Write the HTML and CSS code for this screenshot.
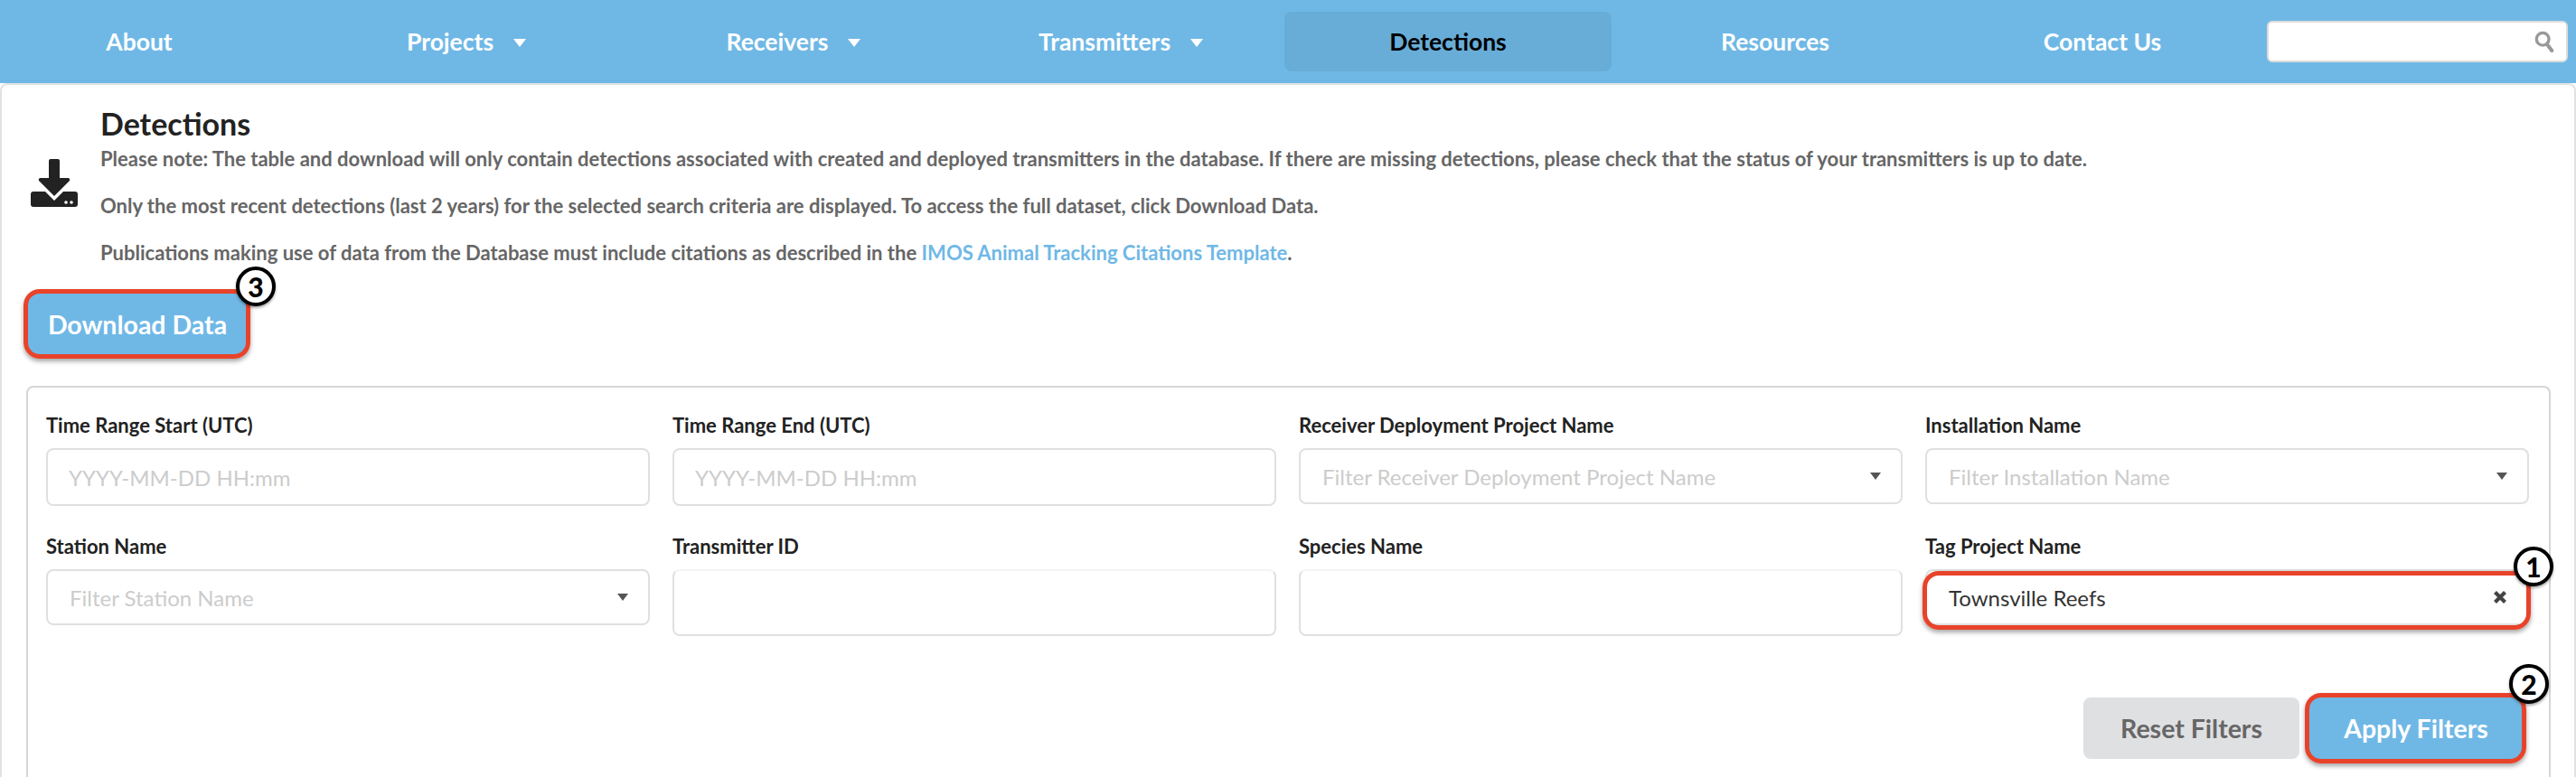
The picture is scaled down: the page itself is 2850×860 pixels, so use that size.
FILE: index.html
```html
<!DOCTYPE html>
<html lang="en">
<head>
    <meta charset="UTF-8">
    <title>Detections</title>
    <link rel="stylesheet" href="styles.css">
</head>
<body>
    <nav class="topnav">
        <a class="nav-item">About</a>
        <a class="nav-item">Projects <span class="nav-caret"></span></a>
        <a class="nav-item">Receivers <span class="nav-caret"></span></a>
        <a class="nav-item">Transmitters <span class="nav-caret"></span></a>
        <a class="nav-item active">Detections</a>
        <a class="nav-item">Resources</a>
        <a class="nav-item">Contact Us</a>
        <div class="nav-search">
            <svg class="search-icon" viewBox="0 0 24 26" width="22" height="24">
                <circle cx="10" cy="10" r="7.5" fill="none" stroke="#999" stroke-width="3.6"/>
                <path d="M15 16l6 8" stroke="#999" stroke-width="4.4" stroke-linecap="round"/>
            </svg>
        </div>
    </nav>

    <main class="panel">
        <div class="intro">
            <svg class="intro-icon" viewBox="0 0 52 53" width="52" height="53">
                <path d="M22 0h8a2 2 0 0 1 2 2v19h9c2 0 3 2 1.500 3.500L26 41 9.500 24.500C8 23 9 21 11 21h9V2a2 2 0 0 1 2-2z" fill="#222"/>
                <path d="M3 36h13l10 10 10-10h13a3 3 0 0 1 3 3v11a3 3 0 0 1-3 3H3a3 3 0 0 1-3-3V39a3 3 0 0 1 3-3z" fill="#222"/>
                <circle cx="39" cy="48" r="1.800" fill="#fff"/>
                <circle cx="45" cy="48" r="1.800" fill="#fff"/>
            </svg>
            <div class="intro-text">
                <h1>Detections</h1>
                <p>Please note: The table and download will only contain detections associated with created and deployed transmitters in the database. If there are missing detections, please check that the status of your transmitters is up to date.</p>
                <p>Only the most recent detections (last 2 years) for the selected search criteria are displayed. To access the full dataset, click Download Data.</p>
                <p>Publications making use of data from the Database must include citations as described in the <a href="#">IMOS Animal Tracking Citations Template</a>.</p>
            </div>
        </div>

        <div class="download-row">
            <button class="btn btn-blue btn-download">
                Download Data
                <span class="callout"></span>
                <span class="step step-3">3</span>
            </button>
        </div>

        <section class="filters">
            <div class="filter-grid">
                <div class="field">
                    <label>Time Range Start (UTC)</label>
                    <input class="box box-date" placeholder="YYYY-MM-DD HH:mm">
                </div>
                <div class="field">
                    <label>Time Range End (UTC)</label>
                    <input class="box box-date" placeholder="YYYY-MM-DD HH:mm">
                </div>
                <div class="field">
                    <label>Receiver Deployment Project Name</label>
                    <div class="box box-select"><span class="placeholder">Filter Receiver Deployment Project Name</span><span class="select-caret"></span></div>
                </div>
                <div class="field">
                    <label>Installation Name</label>
                    <div class="box box-select"><span class="placeholder">Filter Installation Name</span><span class="select-caret"></span></div>
                </div>
                <div class="field">
                    <label>Station Name</label>
                    <div class="box box-select"><span class="placeholder">Filter Station Name</span><span class="select-caret"></span></div>
                </div>
                <div class="field">
                    <label>Transmitter ID</label>
                    <div class="box box-tall"></div>
                </div>
                <div class="field">
                    <label>Species Name</label>
                    <div class="box box-tall"></div>
                </div>
                <div class="field">
                    <label>Tag Project Name</label>
                    <div class="box box-select box-picked">
                        <span class="picked">Townsville Reefs</span>
                        <svg class="clear-icon" viewBox="0 0 16 16" width="16" height="16">
                            <path d="M2.500 2.500l11 11M13.500 2.500l-11 11" stroke="#444" stroke-width="4.200"/>
                        </svg>
                        <span class="callout"></span>
                        <span class="step step-1">1</span>
                    </div>
                </div>
            </div>
            <div class="filter-actions">
                <button class="btn btn-grey">Reset Filters</button>
                <button class="btn btn-blue btn-apply">
                    Apply Filters
                    <span class="callout"></span>
                    <span class="step step-2">2</span>
                </button>
            </div>
        </section>
    </main>
</body>
</html>
```

FILE: styles.css
```css
html, body {
    margin: 0;
    padding: 0;
    height: 860px;
    overflow: hidden;
    background-color: #fff;
    font-family: Lato, "Open Sans", sans-serif;
}

.topnav {
    height: 92px;
    background-color: #6fb8e6;
    display: flex;
    align-items: center;
}

.nav-item {
    flex: 0 0 362px;
    height: 66px;
    display: flex;
    align-items: center;
    justify-content: center;
    gap: 22px;
    border-radius: 8px;
    color: #fff;
    font-size: 26.5px;
    font-weight: 700;
}

.nav-item:first-child {
    margin-left: -27px;
}

.nav-item.active {
    background-color: #67add8;
    color: #000;
}

.nav-caret {
    width: 0;
    height: 0;
    margin-top: 3px;
    border-left: 7px solid transparent;
    border-right: 7px solid transparent;
    border-top: 9px solid #fff;
}

.nav-search {
    flex: 0 0 333px;
    box-sizing: border-box;
    height: 46px;
    margin-left: 1px;
    background-color: #fff;
    border: 2px solid #dcdcdc;
    border-radius: 6px;
    display: flex;
    align-items: center;
    justify-content: flex-end;
    padding-right: 13px;
}

.panel {
    box-sizing: border-box;
    height: 768px;
    border: 2px solid #e2e2e2;
    border-bottom: none;
    border-radius: 8px 8px 0 0;
    padding-left: 27px;
    padding-right: 26px;
}

.intro {
    display: flex;
    align-items: flex-start;
    height: 201px;
}

.intro-icon {
    margin-left: 5px;
    margin-top: 82px;
    flex: none;
}

.intro-text {
    margin-left: 25px;
    padding-top: 23px;
}

.intro-text h1 {
    margin: 0 0 6px;
    font-size: 34px;
    line-height: 40px;
    font-weight: 700;
    color: #222;
}

.intro-text p {
    margin: 0 0 26px;
    font-size: 22px;
    line-height: 26px;
    font-weight: 700;
    color: #666;
}

.intro-text p:last-child {
    margin-bottom: 0;
}

.intro-text a {
    color: #6fb8e6;
    text-decoration: none;
}

.download-row {
    margin-top: 30px;
}

.btn {
    position: relative;
    border: none;
    border-radius: 8px;
    font-family: inherit;
    font-size: 28.5px;
    font-weight: 700;
    cursor: pointer;
}

.btn-blue {
    background-color: #6fb8e6;
    color: #fff;
}

.btn-grey {
    background-color: #dfe0e2;
    color: #666;
}

.btn-download {
    width: 246px;
    height: 68px;
    display: block;
}

.filters {
    box-sizing: border-box;
    margin-top: 34px;
    height: 433px;
    border: 2px solid #d6d6d6;
    border-bottom: none;
    border-radius: 8px 8px 0 0;
    padding: 0 22px 0 20px;
}

.filter-grid {
    display: grid;
    grid-template-columns: repeat(4, 1fr);
    column-gap: 25px;
    padding-top: 28px;
}

.field {
    height: 134px;
}

.field label {
    display: block;
    height: 40px;
    font-size: 22px;
    line-height: 28px;
    font-weight: 700;
    color: #222;
}

.box {
    position: relative;
    box-sizing: border-box;
    display: block;
    width: 100%;
    margin-top: -1px;
    border: 2px solid #e0e0e0;
    border-radius: 8px;
    background-color: #fff;
    font-family: inherit;
    font-size: 24px;
}

.box-date {
    height: 64px;
    padding: 0 23px;
}

.box-date::placeholder {
    color: #ccc;
    opacity: 1;
}

.box-select {
    height: 62px;
    padding: 0 22px 0 24px;
    display: flex;
    align-items: center;
    justify-content: space-between;
}

.box-tall {
    height: 74px;
    border-top-color: #f4f4f4;
}

.placeholder {
    color: #ccc;
}

.picked {
    color: #333;
}

.select-caret {
    width: 0;
    height: 0;
    border-left: 6px solid transparent;
    border-right: 6px solid transparent;
    border-top: 8px solid #555;
}

.clear-icon {
    margin-right: 0;
}

.callout {
    position: absolute;
    border: 5px solid #e8432a;
    border-radius: 18px;
    box-shadow: 0 3px 5px rgba(0, 0, 0, 0.35);
    pointer-events: none;
}

.btn-download .callout {
    inset: -5px -2px -4px -3px;
}

.box-picked .callout {
    inset: 0 -4px -7px -5px;
}

.btn-apply .callout {
    inset: -5px -3px -5px -4px;
}

.step {
    position: absolute;
    box-sizing: border-box;
    width: 44px;
    height: 44px;
    border: 4px solid #000;
    border-radius: 50%;
    background-color: #fff;
    color: #000;
    font-family: Lato, sans-serif;
    font-size: 30px;
    font-weight: 900;
    line-height: 36px;
    text-align: center;
    box-shadow: 0 2px 3px rgba(0, 0, 0, 0.35);
}

.step-3 {
    top: -30px;
    right: -30px;
}

.step-1 {
    top: -27px;
    right: -29px;
}

.step-2 {
    top: -37px;
    right: -28px;
}

.filter-actions {
    display: flex;
    justify-content: flex-end;
    gap: 10px;
    margin-top: 47px;
    padding-right: 6px;
}

.btn-grey {
    width: 239px;
    height: 68px;
}

.btn-apply {
    width: 238px;
    height: 68px;
}
```
